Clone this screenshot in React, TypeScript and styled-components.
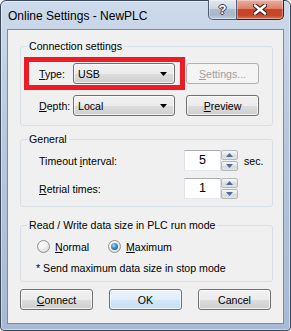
import React from 'react';
import styled, { createGlobalStyle } from 'styled-components';

const GlobalStyle = createGlobalStyle`
  html, body {
    margin: 0;
    padding: 0;
    background: #ffffff;
  }
  body {
    font-family: "Liberation Sans", Arial, sans-serif;
  }
`;

const Window = styled.div`
  box-sizing: border-box;
  width: 291px;
  height: 331px;
  display: flex;
  flex-direction: column;
  padding: 0 6px 6px 6px;
  border: 1px solid #3b4859;
  border-radius: 6px 6px 4px 4px;
  background: linear-gradient(#cddaeb, #b9cadf 35%, #a6bad3);
  box-shadow: inset 0 0 0 1px rgba(255, 255, 255, 0.45);
  font-family: "Liberation Sans", Arial, sans-serif;
  font-size: 10.6px;
  color: #000;
`;

const TitleBar = styled.div`
  height: 28px;
  display: flex;
  align-items: flex-start;
  justify-content: space-between;
`;

const Title = styled.div`
  padding: 8px 0 0 1px;
  font-size: 12px;
  line-height: 14px;
  color: #000;
`;

const CaptionButtons = styled.div`
  display: flex;
  margin-top: -1px;
`;

const CaptionButton = styled.div<{ $close?: boolean }>`
  box-sizing: border-box;
  width: ${p => (p.$close ? 47 : 29)}px;
  height: 20px;
  display: flex;
  align-items: center;
  justify-content: center;
  border: 1px solid ${p => (p.$close ? '#4a1a12' : '#4d5b6e')};
  border-top: none;
  border-left-width: ${p => (p.$close ? 0 : 1)}px;
  border-radius: ${p => (p.$close ? '0 0 5px 0' : '0 0 0 5px')};
  background: ${p =>
    p.$close
      ? 'linear-gradient(#eab0a2 0%, #dc8067 45%, #c8442a 50%, #c5452b 80%, #dc7452 100%)'
      : 'linear-gradient(#e3e9f1 0%, #cdd7e3 45%, #aebccd 50%, #a9b8ca 80%, #c1d0e0 100%)'};
  box-shadow: inset 0 0 0 1px rgba(255, 255, 255, 0.35);
  color: #fff;
  font-weight: bold;
  font-size: 13px;
  line-height: 13px;
  text-shadow: 1px 0 0 #2d3540, -1px 0 0 #2d3540, 0 1px 0 #2d3540, 0 -1px 0 #2d3540;
`;

const Client = styled.div`
  flex: 1;
  display: flex;
  flex-direction: column;
  background: #f0f0f0;
  border: 1px solid #7b8ca2;
  padding: 10px 10px 0 12px;
`;

const Group = styled.fieldset<{ $top: number }>`
  margin: ${p => p.$top}px 0 0 0;
  padding: 0;
  min-width: 0;
  border: 1px solid #d5dfe5;
  border-radius: 3px;
`;

const Legend = styled.legend`
  margin-left: 6px;
  padding: 0 2px;
  line-height: 13px;
`;

const GroupBody = styled.div<{ $pad: string; $gap: number }>`
  display: flex;
  flex-direction: column;
  gap: ${p => p.$gap}px;
  padding: ${p => p.$pad};
`;

const Row = styled.div`
  position: relative;
  display: flex;
  align-items: center;
  height: 21px;
`;

const Label = styled.span<{ $w: number }>`
  width: ${p => p.$w}px;
  flex: none;
  white-space: nowrap;
`;

const Highlight = styled.div`
  position: absolute;
  left: -15px;
  top: -6px;
  width: 161px;
  height: 33px;
  box-sizing: border-box;
  border: 5px solid #ed1c24;
  pointer-events: none;
`;

const Combo = styled.div`
  box-sizing: border-box;
  width: 102px;
  height: 21px;
  margin-right: 11px;
  display: flex;
  align-items: center;
  justify-content: space-between;
  padding: 0 7px 0 4px;
  border: 1px solid #707070;
  border-radius: 3px;
  background: linear-gradient(#f2f2f2 0%, #ebebeb 50%, #dddddd 51%, #cfcfcf 100%);
  box-shadow: inset 0 0 0 1px rgba(255, 255, 255, 0.7);
`;

const Button = styled.div<{ $disabled?: boolean; $default?: boolean }>`
  box-sizing: border-box;
  width: 73px;
  height: 21px;
  display: flex;
  align-items: center;
  justify-content: center;
  border: 1px solid ${p => (p.$disabled ? '#adb2b5' : p.$default ? '#3c7fb1' : '#707070')};
  border-radius: 3px;
  background: ${p =>
    p.$disabled
      ? '#f4f4f4'
      : p.$default
      ? 'linear-gradient(#e9f3fb 0%, #e1eef9 50%, #d2e6f6 51%, #c6def3 100%)'
      : 'linear-gradient(#f2f2f2 0%, #ebebeb 50%, #dddddd 51%, #cfcfcf 100%)'};
  box-shadow: inset 0 0 0 1px rgba(255, 255, 255, ${p => (p.$disabled ? 0 : 0.7)});
  color: ${p => (p.$disabled ? '#a0a0a0' : '#000')};
`;

const Spin = styled.div`
  display: flex;
  height: 21px;
`;

const SpinEdit = styled.div`
  box-sizing: border-box;
  width: 37px;
  height: 21px;
  border: 1px solid;
  border-color: #abadb3 #dbdfe6 #e3e9ef #e2e3ea;
  background: #fff;
  text-align: center;
  font-size: 12.5px;
  line-height: 19px;
`;

const SpinArrows = styled.div`
  display: flex;
  flex-direction: column;
  gap: 1px;
`;

const SpinArrow = styled.div`
  box-sizing: border-box;
  width: 17px;
  height: 10px;
  display: flex;
  align-items: center;
  justify-content: center;
  border: 1px solid #b3b8bf;
  border-radius: 2px;
  background: linear-gradient(#f6f6f6, #e4e4e4 50%, #d9d9d9 51%, #e2e2e2);
`;

const Unit = styled.span`
  margin-left: 6px;
`;

const RadioRow = styled.div`
  display: flex;
  align-items: center;
  height: 13px;
`;

const RadioItem = styled.div<{ $w?: number }>`
  display: flex;
  align-items: center;
  gap: 5px;
  width: ${p => (p.$w ? `${p.$w}px` : 'auto')};
`;

const RadioCircle = styled.div<{ $on?: boolean }>`
  box-sizing: border-box;
  width: 13px;
  height: 13px;
  border-radius: 50%;
  border: 1px solid #8e8f8f;
  background: radial-gradient(circle at 35% 30%, #ffffff 0%, #f2f2f2 40%, #d0d0d0 100%);
  display: flex;
  align-items: center;
  justify-content: center;
  &::after {
    content: '';
    display: ${p => (p.$on ? 'block' : 'none')};
    width: 7px;
    height: 7px;
    border-radius: 50%;
    background: radial-gradient(circle at 40% 35%, #a6dcf8 0%, #3a8cc6 45%, #15517f 100%);
  }
`;

const Note = styled.div`
  line-height: 13px;
  margin-left: -1px;
`;

const ButtonRow = styled.div`
  display: flex;
  justify-content: space-between;
  margin-top: 7px;
  padding-right: 2px;
`;

const Arrow = ({ up, color }: { up?: boolean; color: string }) => (
  <svg width="7" height="4" viewBox="0 0 7 4">
    <path d={up ? 'M0 4h7L3.5 0z' : 'M0 0h7L3.5 4z'} fill={color} />
  </svg>
);

const CloseGlyph = () => (
  <svg width="14" height="11" viewBox="0 0 14 11">
    <path d="M2 1.5l10 8M12 1.5l-10 8" stroke="#3a1a14" strokeWidth="4.6" strokeLinecap="round" />
    <path d="M2 1.5l10 8M12 1.5l-10 8" stroke="#ffffff" strokeWidth="2.6" strokeLinecap="round" />
  </svg>
);

const SpinBox = ({ value }: { value: string }) => (
  <Spin>
    <SpinEdit>{value}</SpinEdit>
    <SpinArrows>
      <SpinArrow><Arrow up color="#4e6c98" /></SpinArrow>
      <SpinArrow><Arrow color="#4e6c98" /></SpinArrow>
    </SpinArrows>
  </Spin>
);

const App: React.FC = () => {
  return (
    <>
      <GlobalStyle />
      <Window>
        <TitleBar>
          <Title>Online Settings - NewPLC</Title>
          <CaptionButtons>
            <CaptionButton>?</CaptionButton>
            <CaptionButton $close><CloseGlyph /></CaptionButton>
          </CaptionButtons>
        </TitleBar>
        <Client>
          <Group $top={0}>
            <Legend>Connection settings</Legend>
            <GroupBody $pad="10px 0 9px 18px" $gap={11}>
              <Row>
                <Highlight />
                <Label $w={34}><u>T</u>ype:</Label>
                <Combo>
                  <span>USB</span>
                  <Arrow color="#000" />
                </Combo>
                <Button $disabled><u>S</u>ettings...</Button>
              </Row>
              <Row>
                <Label $w={34}><u>D</u>epth:</Label>
                <Combo>
                  <span>Local</span>
                  <Arrow color="#000" />
                </Combo>
                <Button><u>P</u>review</Button>
              </Row>
            </GroupBody>
          </Group>

          <Group $top={7}>
            <Legend>General</Legend>
            <GroupBody $pad="4px 0 7px 18px" $gap={7}>
              <Row>
                <Label $w={145}>Timeout <u>i</u>nterval:</Label>
                <SpinBox value="5" />
                <Unit>sec.</Unit>
              </Row>
              <Row>
                <Label $w={145}><u>R</u>etrial times:</Label>
                <SpinBox value="1" />
              </Row>
            </GroupBody>
          </Group>

          <Group $top={12}>
            <Legend>Read / Write data size in PLC run mode</Legend>
            <GroupBody $pad="8px 0 6px 16px" $gap={9}>
              <RadioRow>
                <RadioItem $w={71}>
                  <RadioCircle />
                  <span><u>N</u>ormal</span>
                </RadioItem>
                <RadioItem>
                  <RadioCircle $on />
                  <span><u>M</u>aximum</span>
                </RadioItem>
              </RadioRow>
              <Note>* Send maximum data size in stop mode</Note>
            </GroupBody>
          </Group>

          <ButtonRow>
            <Button><u>C</u>onnect</Button>
            <Button $default>OK</Button>
            <Button>Cancel</Button>
          </ButtonRow>
        </Client>
      </Window>
    </>
  );
};

export default App;
